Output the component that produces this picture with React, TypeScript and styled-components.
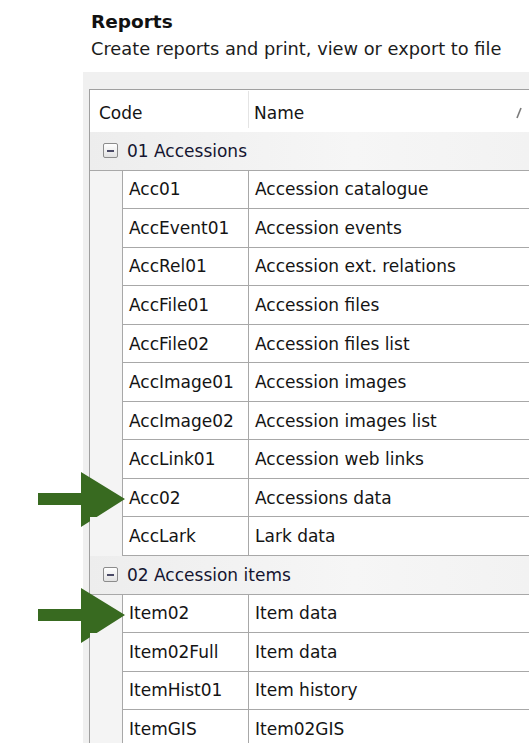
import React from "react";
import styled, { createGlobalStyle } from "styled-components";

const GlobalStyle = createGlobalStyle`
  html, body {
    margin: 0;
    padding: 0;
    background: #ffffff;
    overflow: hidden;
  }
  body {
    font-family: "DejaVu Sans", "Liberation Sans", sans-serif;
    color: #141414;
  }
`;

const Page = styled.div`
  width: 529px;
  height: 743px;
  display: flex;
  flex-direction: column;
`;

const Heading = styled.header`
  padding: 10px 0 0 91px;
  display: flex;
  flex-direction: column;
  gap: 2px;
`;

const Title = styled.h1`
  margin: 0;
  font-size: 18.5px;
  font-weight: bold;
  line-height: 24px;
  color: #111;
`;

const Subtitle = styled.p`
  margin: 0;
  font-size: 17.8px;
  line-height: 26px;
  color: #1c1c1c;
`;

const Panel = styled.section`
  margin: 10px 0 0 83px;
  flex: 1;
  background: #f0f0f0;
  padding: 17px 0 0 6px;
`;

const Grid = styled.div`
  border-top: 1px solid #a0a0a0;
  border-left: 1px solid #a0a0a0;
  background: #f4f4f4;
  display: flex;
  flex-direction: column;
`;

const HeaderRow = styled.div`
  height: 42px;
  box-sizing: border-box;
  padding-top: 3px;
  display: grid;
  grid-template-columns: 158px 1fr;
  background: #ffffff;
  font-size: 17px;
`;

const HeaderCell = styled.div<{ $divider?: boolean }>`
  position: relative;
  display: flex;
  align-items: center;
  justify-content: space-between;
  padding: 0 7px 0 ${(p) => (p.$divider ? "6px" : "9px")};
  &::before {
    content: "";
    display: ${(p) => (p.$divider ? "block" : "none")};
    position: absolute;
    left: 0;
    top: -2px;
    bottom: 4px;
    border-left: 1px solid #e4e4e4;
  }
`;

const GroupRow = styled.div`
  height: 38.56px;
  box-sizing: border-box;
  display: flex;
  align-items: center;
  gap: 9px;
  padding-left: 13px;
  font-size: 17px;
  color: #151530;
  background: linear-gradient(to right, #ededed, #f6f6f6 60%, #f2f2f2);
  border-bottom: 1px solid #a8a8a8;
`;

const Toggle = styled.span`
  width: 13px;
  height: 13px;
  border: 1px solid #8c8c8c;
  border-radius: 2px;
  background: linear-gradient(#ffffff, #e2e2e2);
  display: flex;
  align-items: center;
  justify-content: center;
  &::after {
    content: "";
    width: 7px;
    height: 2px;
    background: #4a4a66;
  }
`;

const DataRow = styled.div`
  position: relative;
  height: 38.56px;
  box-sizing: border-box;
  display: grid;
  grid-template-columns: 32px 126px 1fr;
  font-size: 17px;
`;

const Gutter = styled.div`
  background: #f4f4f4;
`;

const Cell = styled.div`
  display: flex;
  align-items: center;
  padding-left: 6px;
  background: #ffffff;
  border-left: 1px solid #a8a8a8;
  border-bottom: 1px solid #a8a8a8;
  white-space: nowrap;
  overflow: hidden;
`;

const Pointer = styled.svg`
  position: absolute;
  left: -52px;
  top: -7px;
  width: 87px;
  height: 55px;
`;

const SortMark = () => (
  <svg width="6" height="12" viewBox="0 0 6 12">
    <path d="M5 1 L1 11" stroke="#7a7a7a" strokeWidth="1.6" />
  </svg>
);

const GreenArrow = () => (
  <Pointer viewBox="0 0 87 55">
    <polygon points="0,21 43,21 43,0 87,27 43,55 43,33 0,33" fill="#386a20" />
  </Pointer>
);

type Report = { code: string; name: string; flagged?: boolean };
type Group = { title: string; reports: Report[] };

const groups: Group[] = [
  {
    title: "01 Accessions",
    reports: [
      { code: "Acc01", name: "Accession catalogue" },
      { code: "AccEvent01", name: "Accession events" },
      { code: "AccRel01", name: "Accession ext. relations" },
      { code: "AccFile01", name: "Accession files" },
      { code: "AccFile02", name: "Accession files list" },
      { code: "AccImage01", name: "Accession images" },
      { code: "AccImage02", name: "Accession images list" },
      { code: "AccLink01", name: "Accession web links" },
      { code: "Acc02", name: "Accessions data", flagged: true },
      { code: "AccLark", name: "Lark data" },
    ],
  },
  {
    title: "02 Accession items",
    reports: [
      { code: "Item02", name: "Item data", flagged: true },
      { code: "Item02Full", name: "Item data" },
      { code: "ItemHist01", name: "Item history" },
      { code: "ItemGIS", name: "Item02GIS" },
    ],
  },
];

export default function App() {
  return (
    <>
      <GlobalStyle />
      <Page>
        <Heading>
          <Title>Reports</Title>
          <Subtitle>Create reports and print, view or export to file</Subtitle>
        </Heading>
        <Panel>
          <Grid>
            <HeaderRow>
              <HeaderCell>Code</HeaderCell>
              <HeaderCell $divider>
                Name
                <SortMark />
              </HeaderCell>
            </HeaderRow>
            {groups.map((g) => (
              <React.Fragment key={g.title}>
                <GroupRow>
                  <Toggle />
                  {g.title}
                </GroupRow>
                {g.reports.map((r) => (
                  <DataRow key={r.code}>
                    <Gutter />
                    <Cell>{r.code}</Cell>
                    <Cell>{r.name}</Cell>
                    {r.flagged && <GreenArrow />}
                  </DataRow>
                ))}
              </React.Fragment>
            ))}
          </Grid>
        </Panel>
      </Page>
    </>
  );
}
